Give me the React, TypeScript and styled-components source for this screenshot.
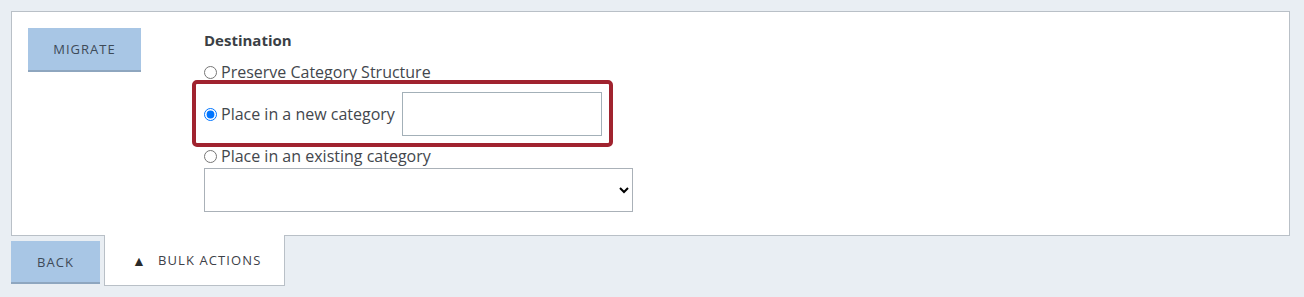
import React, { useState } from "react";
import styled, { createGlobalStyle } from "styled-components";

const GlobalStyle = createGlobalStyle`
  body {
    margin: 0;
    background: #e9eef3;
    font-family: "Open Sans", "Liberation Sans", sans-serif;
    color: #3b3f45;
  }
`;

const Page = styled.div`
  padding: 11px 14px 0 11px;
`;

const Panel = styled.div`
  display: flex;
  height: 225px;
  box-sizing: border-box;
  padding: 16px;
  background: #fff;
  border: 1px solid #b9c0c7;
`;

const FlatButton = styled.button<{ $w: number; $h: number }>`
  width: ${(p) => p.$w}px;
  height: ${(p) => p.$h}px;
  flex-shrink: 0;
  padding: 0;
  background: #a8c6e5;
  border: none;
  border-bottom: 2px solid #8ea6bf;
  color: #3d4a58;
  font-family: inherit;
  font-size: 13px;
  letter-spacing: 1px;
  cursor: pointer;
`;

const Form = styled.div`
  display: flex;
  flex-direction: column;
  align-items: flex-start;
  margin: 2px 0 0 63px;
`;

const Heading = styled.div`
  font-size: 15px;
  font-weight: 700;
  line-height: 20px;
  margin-bottom: 12px;
`;

const Option = styled.label`
  display: flex;
  align-items: center;
  height: 20px;
  font-size: 16px;
  color: #43474d;
  cursor: pointer;
`;

const Radio = styled.input`
  width: 13px;
  height: 13px;
  margin: 0 4px 0 0;
`;

const Highlight = styled.div`
  display: flex;
  align-items: center;
  margin: -2px 0 -1px -12px;
  padding: 8px 7px 7px 8px;
  border: 4px solid #a0232f;
  border-radius: 5px;
`;

const TextInput = styled.input`
  width: 200px;
  height: 44px;
  box-sizing: border-box;
  margin-left: 7px;
  border: 1px solid #a3b0b8;
  font-family: inherit;
  font-size: 15px;
`;

const Select = styled.select`
  width: 429px;
  height: 44px;
  margin-top: 2px;
  border: 1px solid #aab1b8;
  border-radius: 0;
  background: #fff;
  font-family: inherit;
  font-size: 15px;
`;

const Footer = styled.div`
  display: flex;
  align-items: flex-start;
  gap: 4px;
`;

const BackButton = styled(FlatButton)`
  margin-top: 5px;
`;

const Tab = styled.div`
  display: flex;
  align-items: center;
  gap: 11px;
  width: 181px;
  height: 51px;
  box-sizing: border-box;
  margin-top: -1px;
  padding: 0 0 0 27px;
  background: #fff;
  border: 1px solid #b9c0c7;
  border-top: none;
  color: #3d4148;
  font-size: 13px;
  letter-spacing: 1.1px;
`;

const Arrow = styled.span`
  font-size: 14px;
  color: #2a2a2a;
`;

const App = () => {
  const [dest, setDest] = useState("new");

  return (
    <>
      <GlobalStyle />
      <Page>
        <Panel>
          <FlatButton $w={113} $h={44}>MIGRATE</FlatButton>
          <Form>
            <Heading>Destination</Heading>
            <Option>
              <Radio
                type="radio"
                name="dest"
                checked={dest === "preserve"}
                onChange={() => setDest("preserve")}
              />
              Preserve Category Structure
            </Option>
            <Highlight>
              <Option>
                <Radio
                  type="radio"
                  name="dest"
                  checked={dest === "new"}
                  onChange={() => setDest("new")}
                />
                Place in a new category
              </Option>
              <TextInput type="text" />
            </Highlight>
            <Option>
              <Radio
                type="radio"
                name="dest"
                checked={dest === "existing"}
                onChange={() => setDest("existing")}
              />
              Place in an existing category
            </Option>
            <Select>
              <option></option>
            </Select>
          </Form>
        </Panel>
        <Footer>
          <BackButton $w={89} $h={43}>BACK</BackButton>
          <Tab>
            <Arrow>▲</Arrow>
            BULK ACTIONS
          </Tab>
        </Footer>
      </Page>
    </>
  );
};

export default App;
